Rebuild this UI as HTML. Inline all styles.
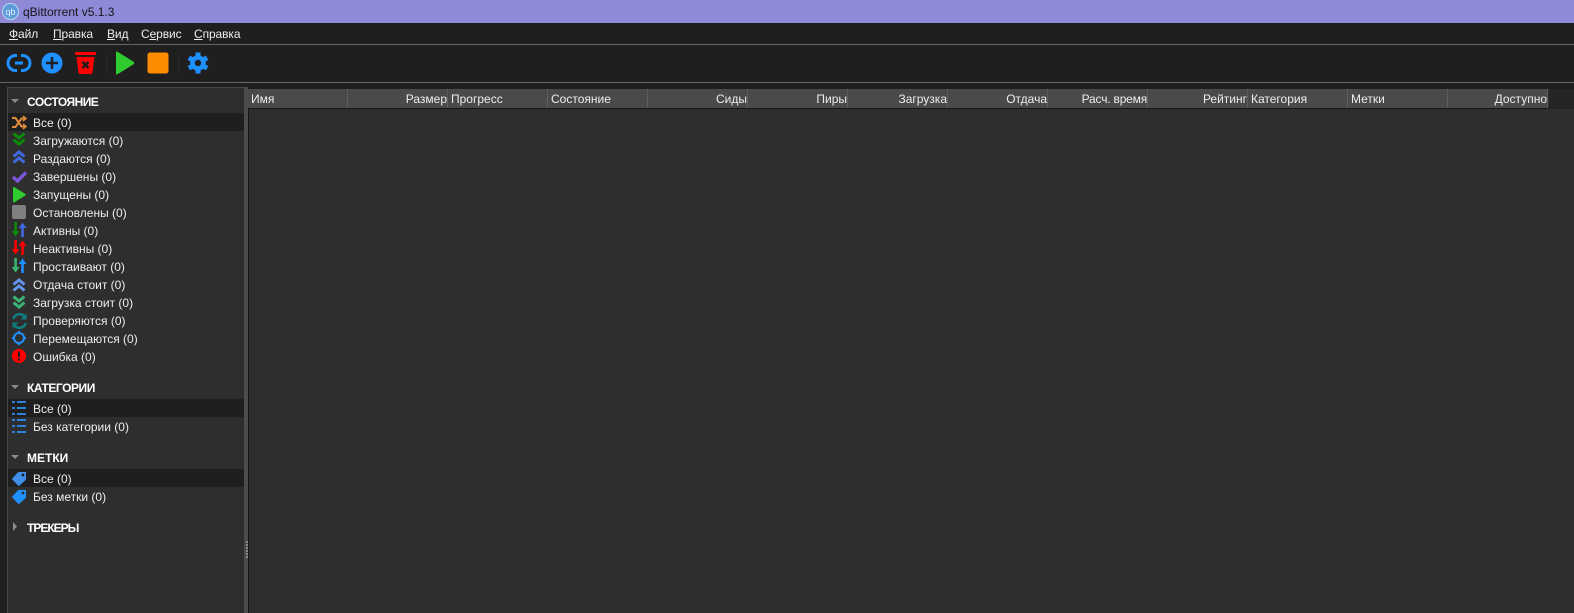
<!DOCTYPE html>
<html><head><meta charset="utf-8"><style>
html,body{margin:0;padding:0;background:#1f1f1f;}
body{width:1574px;height:613px;overflow:hidden;position:relative;font:12px "Liberation Sans",sans-serif;color:#ededed;}
.a{position:absolute;}
.t{position:absolute;white-space:nowrap;line-height:18px;height:18px;margin-top:1px;}
.b{font-weight:bold;color:#fff;}
.m{letter-spacing:-.1px;margin-top:0;}
.th{position:absolute;top:89px;height:19px;line-height:21px;background:#4a4a4a;border-right:1px solid #5f5f5f;white-space:nowrap;color:#ededed;}
.l{padding-left:3px;width:96px;}
.r{text-align:right;width:99px;}
u{text-decoration:underline;text-underline-offset:1px;}
svg{position:absolute;overflow:visible;}
</style></head><body>
<div class="a" style="left:0;top:0;width:1574px;height:23px;background:#8e8ad8"></div>
<svg style="left:2px;top:2px" width="17" height="19" viewBox="0 0 17 19"><circle cx="8.500" cy="9.500" r="8" fill="#5b9bd8" stroke="#bcd6f0" stroke-width="1"/><text x="8.500" y="13" text-anchor="middle" font-family="Liberation Sans" font-size="9" fill="#e6f0fa">qb</text></svg>
<div class="t" style="left:23px;top:2px;color:#151515;font-size:12px">qBittorrent v5.1.3</div>

<div class="t m" style="left:9px;top:25px"><u>Ф</u>айл</div>
<div class="t m" style="left:53px;top:25px"><u>П</u>равка</div>
<div class="t m" style="left:107px;top:25px"><u>В</u>ид</div>
<div class="t m" style="left:141px;top:25px">С<u>е</u>рвис</div>
<div class="t m" style="left:194px;top:25px"><u>С</u>правка</div>
<div class="a" style="left:0;top:44px;width:1574px;height:1px;background:#666"></div>

<svg style="left:0;top:45px" width="220" height="36" viewBox="0 45 220 36">
<path d="M17 55.500h-1.500a7.500 7.500 0 0 0 0 15H17M21 55.500h1.500a7.500 7.500 0 0 1 0 15H21" fill="none" stroke="#1e90ff" stroke-width="3"/>
<path d="M15 63h8" stroke="#1e90ff" stroke-width="3"/>
<circle cx="52" cy="63" r="10.500" fill="#1e90ff"/><path d="M52 57v12M46 63h12" stroke="#1f1f1f" stroke-width="2.500"/>
<rect x="75" y="52" width="21" height="3" rx="1" fill="#f00"/><path d="M76.500 57h18l-2 15.500a1.500 1.500 0 0 1-1.500 1.500h-11a1.500 1.500 0 0 1-1.500-1.500z" fill="#f00"/>
<path d="M82.500 62l6 6M88.500 62l-6 6" stroke="#1f1f1f" stroke-width="2.500"/>
<path d="M116 52.500v21a1 1 0 0 0 1.500.8l16-10a1.500 1.500 0 0 0 0-2.600l-16-10a1 1 0 0 0-1.500.8z" fill="#2ecc2e"/>
<rect x="147.500" y="52.500" width="21" height="21" rx="2.500" fill="#ff8c00"/>
<g stroke="#1e90ff" stroke-width="5"><path d="M198 52.500v21"/><path d="M188.900 57.750l18.200 10.500"/><path d="M188.900 68.250l18.200-10.500"/></g>
<circle cx="198" cy="63" r="7.800" fill="#1e90ff"/><circle cx="198" cy="63" r="3.200" fill="#1f1f1f"/>
<rect x="106" y="53" width="1" height="20" fill="#292929"/><rect x="178" y="53" width="1" height="20" fill="#292929"/>
</svg>
<div class="a" style="left:0;top:82px;width:1574px;height:1px;background:#666"></div>

<!-- sidebar -->
<div class="a" style="left:7px;top:87px;width:237px;height:526px;background:#2e2e2e;border-left:1px solid #484848;border-top:1px solid #484848;box-sizing:border-box"></div>
<div class="a" style="left:244px;top:87px;width:4px;height:526px;background:#4c4c4c"></div>
<div class="a" style="left:248px;top:87px;width:1px;height:526px;background:#151515"></div>
<svg style="left:246px;top:541px" width="2" height="18"><path d="M0 1h2M0 4h2M0 7h2M0 10h2M0 13h2M0 16h2" stroke="#9a9a9a" stroke-width="1.500"/></svg>

<div class="a" style="left:8px;top:113px;width:236px;height:18px;background:#1f1f1f"></div>
<div class="a" style="left:8px;top:399px;width:236px;height:18px;background:#1f1f1f"></div>
<div class="a" style="left:8px;top:469px;width:236px;height:18px;background:#1f1f1f"></div>

<svg style="left:0;top:0" width="30" height="540" viewBox="0 0 30 540">
<path d="M11 99h8l-4 4z" fill="#8c8c8c"/><path d="M11 385h8l-4 4z" fill="#8c8c8c"/><path d="M11 455h8l-4 4z" fill="#8c8c8c"/><path d="M13 522l4 4.500-4 4.500z" fill="#8c8c8c"/>
<!-- all -->
<g fill="none" stroke="#e08a3c" stroke-width="2"><path d="M12 118h3.500l6 8.500H25M12 127h3.500l6-8.500H25"/><path d="M23 116l3 2.500-3 2.500M23 124l3 2.500-3 2.500" stroke-width="1.500"/></g>
<!-- down -->
<g fill="none" stroke="#0a8a0a" stroke-width="3"><path d="M13.500 133.500l5.500 4.500 5.500-4.500M13.500 139.500l5.500 4.500 5.500-4.500"/></g>
<!-- up -->
<g fill="none" stroke="#4169e1" stroke-width="3"><path d="M13.500 156.500l5.500-4.500 5.500 4.500M13.500 162.500l5.500-4.500 5.500 4.500"/></g>
<!-- check -->
<path d="M13 177l4.500 4 8.500-8.500" fill="none" stroke="#7a55d8" stroke-width="3.500"/>
<!-- play -->
<path d="M13 188v13.500a1 1 0 0 0 1.500.8l10.500-6.500a1.100 1.100 0 0 0 0-2l-10.500-6.500a1 1 0 0 0-1.500.700z" fill="#2ecc2e"/>
<!-- stop -->
<rect x="12" y="205" width="14" height="14" rx="2" fill="#808080"/>
<!-- arrows -->
<path d="M14.300 222h2.600v9h2.600l-3.900 5.500-3.900-5.500h2.600z" fill="#0a8a0a"/><path d="M21.200 237v-9h-2.600l3.900-5.500 3.900 5.500h-2.600v9z" fill="#4169e1"/>
<path d="M14.300 240h2.600v9h2.600l-3.900 5.500-3.900-5.500h2.600z" fill="#f00"/><path d="M21.200 255v-9h-2.600l3.900-5.500 3.900 5.500h-2.600v9z" fill="#f00"/>
<path d="M14.300 258h2.600v9h2.600l-3.900 5.500-3.900-5.500h2.600z" fill="#3cb371"/><path d="M21.200 273v-9h-2.600l3.900-5.500 3.900 5.500h-2.600v9z" fill="#1e90ff"/>
<g stroke-width="3" fill="none">
<path d="M13.500 284.500l5.500-4.500 5.500 4.500M13.500 290.500l5.500-4.500 5.500 4.500" stroke="#6495ed"/>
<path d="M13.500 296.500l5.500 4.500 5.500-4.500M13.500 302.500l5.500 4.500 5.500-4.500" stroke="#3cb371"/>
</g>
<!-- sync -->
<g fill="none" stroke="#0e7f7f" stroke-width="2.500"><path d="M13.200 319a6.500 6.500 0 0 1 10.800-3"/><path d="M25.800 323a6.500 6.500 0 0 1-10.800 3"/></g>
<path d="M26.500 313.500v6h-6zM12.500 328.500v-6h6z" fill="#0e7f7f"/>
<!-- move -->
<circle cx="19" cy="338" r="5" fill="none" stroke="#1e90ff" stroke-width="2"/><path d="M19 331v3M19 342v3M12 338h3M23 338h3" stroke="#1e90ff" stroke-width="2"/>
<!-- err -->
<circle cx="19" cy="356" r="7" fill="#f00"/><path d="M19 351.500v5.500M19 358.500v2" stroke="#1f1f1f" stroke-width="2"/>
<!-- lists -->
<g fill="#2a82da"><path d="M12 401h3v2h-3zM17 401h9v2h-9zM12 407h3v2h-3zM17 407h9v2h-9zM12 413h3v2h-3zM17 413h9v2h-9z"/>
<path d="M12 419h3v2h-3zM17 419h9v2h-9zM12 425h3v2h-3zM17 425h9v2h-9zM12 431h3v2h-3zM17 431h9v2h-9z"/></g>
<!-- tags -->
<path d="M18.500 472.500h7v7l-6.800 6-6.200-6.500z" fill="#3f8fe8" stroke="#3f8fe8" stroke-linejoin="round"/><circle cx="23" cy="475" r="1.400" fill="#1f1f1f"/>
<path d="M18.500 490.500h7v7l-6.800 6-6.200-6.500z" fill="#1e90ff" stroke="#1e90ff" stroke-linejoin="round"/><circle cx="23" cy="493" r="1.400" fill="#2e2e2e"/>
</svg>

<div class="t b" style="left:27px;top:92px;letter-spacing:-.55px">СОСТОЯНИЕ</div>
<div class="t" style="left:33px;top:113px">Все (0)</div>
<div class="t" style="left:33px;top:131px">Загружаются (0)</div>
<div class="t" style="left:33px;top:149px">Раздаются (0)</div>
<div class="t" style="left:33px;top:167px">Завершены (0)</div>
<div class="t" style="left:33px;top:185px">Запущены (0)</div>
<div class="t" style="left:33px;top:203px">Остановлены (0)</div>
<div class="t" style="left:33px;top:221px">Активны (0)</div>
<div class="t" style="left:33px;top:239px">Неактивны (0)</div>
<div class="t" style="left:33px;top:257px">Простаивают (0)</div>
<div class="t" style="left:33px;top:275px">Отдача стоит (0)</div>
<div class="t" style="left:33px;top:293px">Загрузка стоит (0)</div>
<div class="t" style="left:33px;top:311px">Проверяются (0)</div>
<div class="t" style="left:33px;top:329px">Перемещаются (0)</div>
<div class="t" style="left:33px;top:347px">Ошибка (0)</div>
<div class="t b" style="left:27px;top:378px;letter-spacing:-.45px">КАТЕГОРИИ</div>
<div class="t" style="left:33px;top:399px">Все (0)</div>
<div class="t" style="left:33px;top:417px">Без категории (0)</div>
<div class="t b" style="left:27px;top:448px">МЕТКИ</div>
<div class="t" style="left:33px;top:469px">Все (0)</div>
<div class="t" style="left:33px;top:487px">Без метки (0)</div>
<div class="t b" style="left:27px;top:518px;letter-spacing:-1px">ТРЕКЕРЫ</div>

<!-- table -->
<div class="a" style="left:249px;top:88px;width:1325px;height:525px;background:#2e2e2e"></div>
<div class="a" style="left:249px;top:88px;width:1325px;height:1px;background:#1f1f1f"></div>
<div class="a" style="left:1549px;top:89px;width:25px;height:20px;background:#252525"></div>
<div class="a" style="left:249px;top:108px;width:1300px;height:1px;background:#161616"></div>
<div class="th l" style="left:248px">Имя</div>
<div class="th r" style="left:348px">Размер</div>
<div class="th l" style="left:448px">Прогресс</div>
<div class="th l" style="left:548px">Состояние</div>
<div class="th r" style="left:648px">Сиды</div>
<div class="th r" style="left:748px">Пиры</div>
<div class="th r" style="left:848px">Загрузка</div>
<div class="th r" style="left:948px">Отдача</div>
<div class="th r" style="left:1048px;letter-spacing:-.2px">Расч. время</div>
<div class="th r" style="left:1148px">Рейтинг</div>
<div class="th l" style="left:1248px">Категория</div>
<div class="th l" style="left:1348px">Метки</div>
<div class="th r" style="left:1448px">Доступно</div>
</body></html>
